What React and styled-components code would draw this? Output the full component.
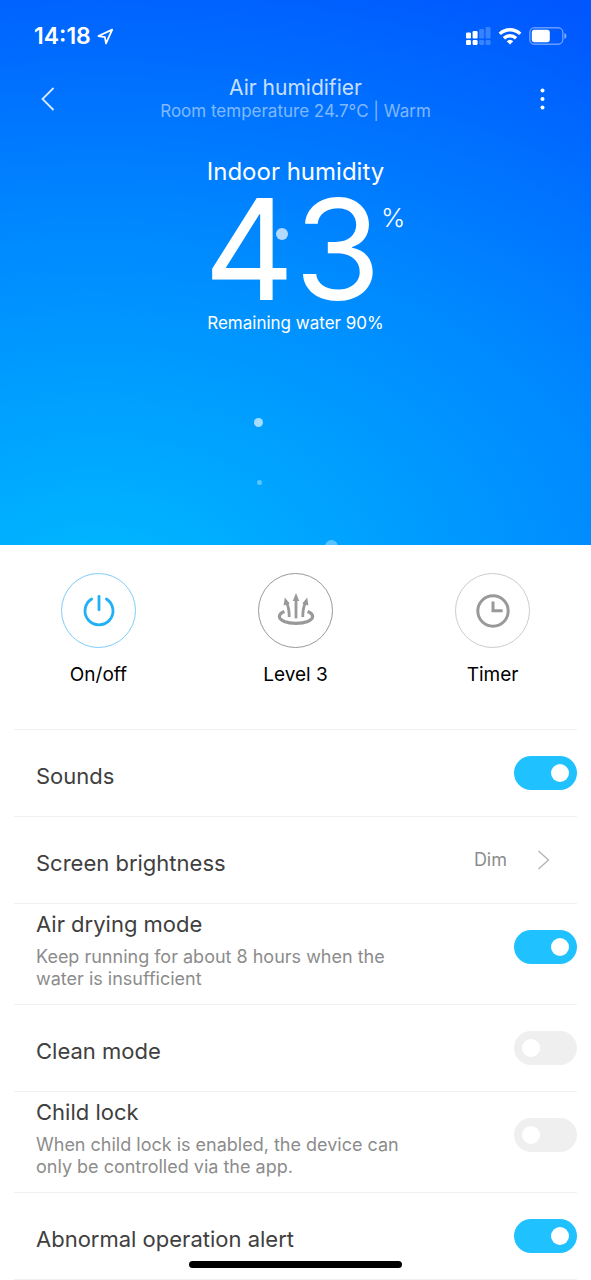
import React from "react";
import styled, { createGlobalStyle } from "styled-components";

const GlobalStyle = createGlobalStyle`
  * {
    box-sizing: border-box;
  }

  body {
    margin: 0;
    background: white;
    font-family: Inter, "Liberation Sans", sans-serif;
    color: #404040;
  }

  button {
    border: none;
    background: none;
    padding: 0;
    font: inherit;
    color: inherit;
    cursor: pointer;
  }
`;

const Hero = styled.header`
  position: relative;
  overflow: hidden;
  padding-bottom: 210px;
  color: white;
  background: radial-gradient(
    170% 122% at 16% 108%,
    #00baff 0%,
    #0088ff 55%,
    #0056ff 100%
  );
`;

const StatusBar = styled.div`
  height: 72px;
  padding: 0 24px 0 34px;
  display: flex;
  align-items: center;
  justify-content: space-between;
`;

const StatusGroup = styled.div`
  display: flex;
  align-items: center;
  gap: ${props => props.$gap}px;
`;

const Time = styled.time`
  font-size: 23px;
  line-height: 28px;
  font-weight: 600;
`;

const NavBar = styled.nav`
  display: flex;
  align-items: center;
  justify-content: space-between;
  padding: 4px 32px 0;
`;

const NavButton = styled.button`
  width: 32px;
  height: 44px;
  display: flex;
  align-items: center;
  justify-content: center;
`;

const Heading = styled.div`
  text-align: center;
`;

const Title = styled.h1`
  margin: 0;
  font-size: 21px;
  line-height: 24px;
  font-weight: 400;
  color: rgba(255, 255, 255, 0.8);
`;

const Subtitle = styled.p`
  margin: 0;
  font-size: 17px;
  line-height: 22px;
  color: rgba(255, 255, 255, 0.5);
`;

const Reading = styled.section`
  padding-top: 34px;
  text-align: center;
`;

const ReadingLabel = styled.h2`
  margin: 0;
  font-size: 24px;
  line-height: 32px;
  font-weight: 400;
`;

const ReadingValue = styled.div`
  display: grid;
  grid-template-columns: 1fr auto 1fr;
  padding: 3px 6px 4px 0;
`;

const Value = styled.span`
  grid-column: 2;
  font-size: 140px;
  line-height: 116px;
`;

const Unit = styled.span`
  padding-top: 11px;
  text-align: left;
  font-size: 26px;
  line-height: 32px;
  font-weight: 300;
`;

const Remaining = styled.p`
  margin: 0;
  font-size: 17px;
  line-height: 24px;
`;

const Bubble = styled.span`
  position: absolute;
  left: ${props => props.$left}%;
  top: ${props => props.$top}px;
  width: ${props => props.$size}px;
  height: ${props => props.$size}px;
  border-radius: 50%;
  background: ${props => props.$color};
`;

const Actions = styled.section`
  display: grid;
  grid-template-columns: repeat(3, 1fr);
  padding: 28px 0 42px;
`;

const Action = styled.button`
  display: flex;
  flex-direction: column;
  align-items: center;
  gap: 15px;
  font-size: 19px;
  line-height: 24px;
  color: black;
`;

const Circle = styled.span`
  width: 75px;
  height: 75px;
  border: 1px solid ${props => props.$border};
  border-radius: 50%;
  display: flex;
  align-items: center;
  justify-content: center;
`;

const Settings = styled.ul`
  margin: 0 14px;
  padding: 0;
  list-style: none;
  border-bottom: 1px solid #f0f0f0;
`;

const Row = styled.li`
  display: flex;
  align-items: flex-start;
  justify-content: space-between;
  border-top: 1px solid #f0f0f0;
  padding-left: 22px;
`;

const RowText = styled.div`
  padding: ${props => (props.$tall ? "6px 0 14px" : "32px 0 26px")};
`;

const RowLabel = styled.label`
  display: block;
  font-size: 22px;
  line-height: 28px;
`;

const RowNote = styled.p`
  margin: 8px 0 0;
  max-width: 380px;
  font-size: 18px;
  line-height: 22px;
  color: #8c8c8c;
`;

const Toggle = styled.input`
  appearance: none;
  flex: none;
  display: flex;
  align-items: center;
  justify-content: flex-start;
  width: 63px;
  height: 34px;
  margin: 26px 0 0;
  padding: 0 8px;
  border-radius: 17px;
  background: #efefef;
  cursor: pointer;

  &::before {
    content: "";
    width: 18px;
    height: 18px;
    border-radius: 50%;
    background: white;
  }

  &:checked {
    justify-content: flex-end;
    background: #1fc2ff;
  }
`;

const Picker = styled.button`
  display: flex;
  align-items: center;
  gap: 30px;
  height: 34px;
  margin: 26px 27px 0 0;
  font-size: 18px;
  line-height: 24px;
  color: #8c8c8c;
`;

const HomeIndicator = styled.div`
  position: fixed;
  bottom: 12px;
  left: 32%;
  right: 32%;
  height: 7px;
  border-radius: 4px;
  background: black;
`;

function LocationIcon() {
  return (
    <svg width="17" height="17" viewBox="0 0 17 17" fill="none">
      <path
        d="M1.4 8 15.2 1.6 9 15.4 7.9 9.1Z"
        stroke="white"
        strokeWidth="1.8"
        strokeLinejoin="round"
      />
    </svg>
  );
}

function SignalIcon() {
  return (
    <svg width="25" height="19" viewBox="0 0 25 19" fill="white">
      <rect x="0" y="5.5" width="5" height="6" rx="1.3" />
      <rect x="6.6" y="4" width="5" height="7.5" rx="1.3" />
      <rect x="0" y="13" width="5" height="5" rx="1.3" />
      <rect x="6.6" y="13" width="5" height="5" rx="1.3" />
      <g opacity="0.22">
        <rect x="13.2" y="2" width="5" height="9.5" rx="1.3" />
        <rect x="19.6" y="0" width="5" height="11.5" rx="1.3" />
        <rect x="13.2" y="13" width="5" height="5" rx="1.3" />
        <rect x="19.6" y="13" width="5" height="5" rx="1.3" />
      </g>
    </svg>
  );
}

function WifiIcon() {
  return (
    <svg width="24" height="18" viewBox="0 0 24 18" fill="none">
      <g stroke="white" strokeWidth="3.4">
        <path d="M1.8 6.9a14.6 14.6 0 0 1 20.4 0" />
        <path d="M5.9 11.2a8.8 8.8 0 0 1 12.2 0" />
      </g>
      <path d="M12 17.6 8.7 14.3a4.8 4.8 0 0 1 6.6 0Z" fill="white" />
    </svg>
  );
}

function BatteryIcon() {
  return (
    <svg width="38" height="18" viewBox="0 0 38 18" fill="none">
      <rect
        x="0.8"
        y="0.8"
        width="33"
        height="16.4"
        rx="4.6"
        stroke="white"
        strokeOpacity="0.4"
        strokeWidth="1.4"
      />
      <rect x="2.8" y="2.8" width="18" height="12.4" rx="2.6" fill="white" />
      <path d="M35.4 6c1.4.5 2 1.6 2 3s-.6 2.5-2 3Z" fill="white" fillOpacity="0.5" />
    </svg>
  );
}

function PowerIcon() {
  return (
    <svg width="34" height="34" viewBox="0 0 34 34" fill="none">
      <g stroke="#1fb0f5" strokeWidth="2.8" strokeLinecap="round">
        <path d="M9.6 5a14 14 0 1 0 14.8 0" />
        <path d="M17 2.4v13.4" />
      </g>
    </svg>
  );
}

function MistIcon() {
  return (
    <svg width="38" height="36" viewBox="0 0 38 36" fill="none">
      <g stroke="#999999" strokeWidth="2.8">
        <path d="M19 6v19.4" />
        <path d="M12.2 24c0-6-.2-9.600-2.400-13.600" />
        <path d="M25.8 24c0-6 .2-9.600 2.400-13.600" />
      </g>
      <g fill="#999999">
        <path d="M19 0l3.200 8h-6.400Z" />
        <path d="M7.800 4.400l5 6-6.200 2.200Z" />
        <path d="M30.2 4.400l-5 6 6.200 2.200Z" />
      </g>
      <path
        d="M7.400 18.600C3.800 20 2.400 21.700 2.400 23.600c0 3.900 7.300 6.700 16.600 6.700s16.600-2.800 16.600-6.700c0-1.900-1.400-3.600-5-5"
        stroke="#999999"
        strokeWidth="3.200"
      />
    </svg>
  );
}

function ClockIcon() {
  return (
    <svg width="34" height="34" viewBox="0 0 34 34" fill="none">
      <g stroke="#999999" strokeWidth="3">
        <circle cx="17" cy="17" r="15.2" />
        <path d="M17 7.4v9.4h9.6" />
      </g>
    </svg>
  );
}

const bubbles = [
  { left: 46.7, top: 228, size: 12, color: "rgba(200, 226, 255, 0.9)" },
  { left: 43, top: 418, size: 9, color: "rgba(255, 255, 255, 0.65)" },
  { left: 43.5, top: 480, size: 5, color: "rgba(255, 255, 255, 0.35)" },
  { left: 55, top: 540, size: 13, color: "rgba(255, 255, 255, 0.35)" }
];

const actions = [
  { label: "On/off", border: "#7fcdf8", Icon: PowerIcon },
  { label: "Level 3", border: "#999999", Icon: MistIcon },
  { label: "Timer", border: "#cccccc", Icon: ClockIcon }
];

const settings = [
  { id: "sounds", label: "Sounds", on: true },
  { id: "brightness", label: "Screen brightness", value: "Dim" },
  {
    id: "drying",
    label: "Air drying mode",
    note: "Keep running for about 8 hours when the water is insufficient",
    on: true
  },
  { id: "clean", label: "Clean mode", on: false },
  {
    id: "lock",
    label: "Child lock",
    note:
      "When child lock is enabled, the device can only be controlled via the app.",
    on: false
  },
  { id: "alert", label: "Abnormal operation alert", on: true }
];

function Setting({ id, label, note, value, on }) {
  return (
    <Row>
      <RowText $tall={Boolean(note)}>
        <RowLabel htmlFor={id}>{label}</RowLabel>
        {note && <RowNote>{note}</RowNote>}
      </RowText>
      {value ? (
        <Picker id={id} type="button">
          {value}
          <svg width="13" height="20" viewBox="0 0 13 20" fill="none">
            <path d="M1.5 1 11.5 10l-10 9" stroke="#b5b5b5" strokeWidth="1.4" />
          </svg>
        </Picker>
      ) : (
        <Toggle id={id} type="checkbox" defaultChecked={on} />
      )}
    </Row>
  );
}

export default function App() {
  return (
    <>
      <GlobalStyle />
      <Hero>
        <StatusBar>
          <StatusGroup $gap={6}>
            <Time>14:18</Time>
            <LocationIcon />
          </StatusGroup>
          <StatusGroup $gap={7}>
            <SignalIcon />
            <WifiIcon />
            <BatteryIcon />
          </StatusGroup>
        </StatusBar>
        <NavBar>
          <NavButton type="button" aria-label="Back">
            <svg width="14" height="24" viewBox="0 0 14 24" fill="none">
              <path
                d="M12.5 1 1.5 12l11 11"
                stroke="white"
                strokeOpacity="0.85"
                strokeWidth="1.8"
              />
            </svg>
          </NavButton>
          <Heading>
            <Title>Air humidifier</Title>
            <Subtitle>Room temperature 24.7°C | Warm</Subtitle>
          </Heading>
          <NavButton type="button" aria-label="More">
            <svg width="5" height="22" viewBox="0 0 5 22" fill="white">
              <circle cx="2.5" cy="2.4" r="2" />
              <circle cx="2.5" cy="11" r="2" />
              <circle cx="2.5" cy="19.6" r="2" />
            </svg>
          </NavButton>
        </NavBar>
        <Reading>
          <ReadingLabel>Indoor humidity</ReadingLabel>
          <ReadingValue>
            <Value>43</Value>
            <Unit>%</Unit>
          </ReadingValue>
          <Remaining>Remaining water 90%</Remaining>
        </Reading>
        {bubbles.map(({ left, top, size, color }) => (
          <Bubble key={top} $left={left} $top={top} $size={size} $color={color} />
        ))}
      </Hero>
      <main>
        <Actions>
          {actions.map(({ label, border, Icon }) => (
            <Action key={label} type="button">
              <Circle $border={border}>
                <Icon />
              </Circle>
              {label}
            </Action>
          ))}
        </Actions>
        <Settings>
          {settings.map(setting => (
            <Setting key={setting.id} {...setting} />
          ))}
        </Settings>
      </main>
      <HomeIndicator />
    </>
  );
}
